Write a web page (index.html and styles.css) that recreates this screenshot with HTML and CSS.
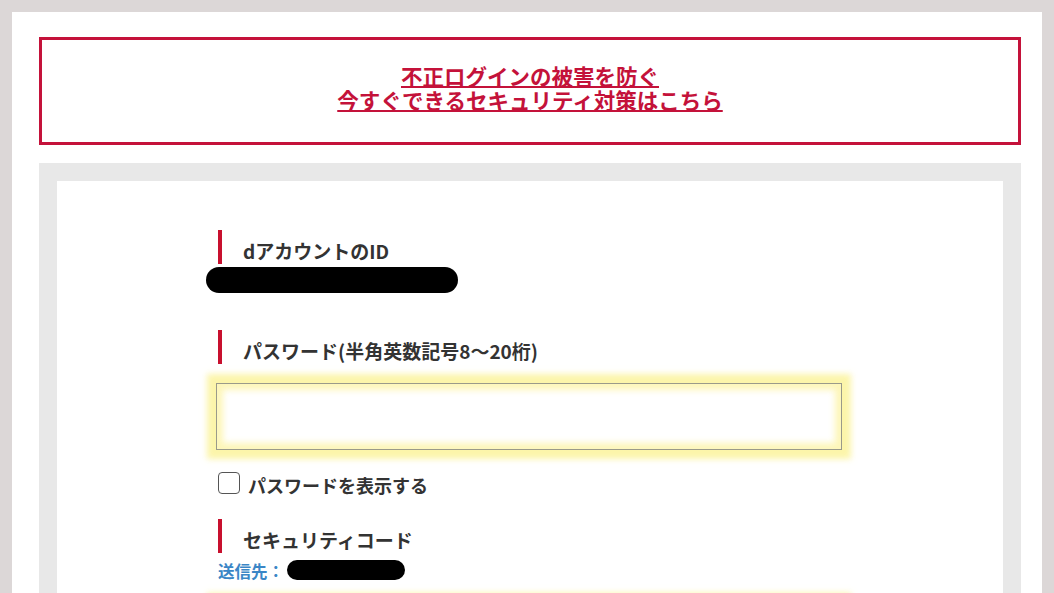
FILE: index.html
```html
<!DOCTYPE html>
<html lang="ja">
<head>
<meta charset="utf-8">
<title>ログイン</title>
<link rel="stylesheet" href="styles.css">
</head>
<body>
<div class="page">
  <div class="notice">
    <a class="notice-link" href="#">不正ログインの被害を防ぐ<br>今すぐできるセキュリティ対策はこちら</a>
  </div>
  <div class="frame">
    <div class="card">
      <form class="form">
        <div class="field-label">dアカウントのID</div>
        <div class="redact redact-id"></div>

        <div class="field-label label-pw">パスワード(半角英数記号8〜20桁)</div>
        <div class="input-wrap">
          <input class="text-input" type="password">
        </div>
        <label class="check-row">
          <span class="checkbox"></span>
          <span class="check-text">パスワードを表示する</span>
        </label>

        <div class="field-label label-sec">セキュリティコード</div>
        <div class="send-row">
          <span class="send-label">送信先：</span>
          <span class="redact redact-send"></span>
        </div>
        <div class="input-wrap input-sec">
          <input class="text-input" type="text">
        </div>
      </form>
    </div>
  </div>
</div>
</body>
</html>
```

FILE: styles.css
```css
html, body {
  margin: 0;
  padding: 0;
}
body {
  background: #dcd7d7;
  font-family: "Noto Sans CJK JP", "Noto Sans", sans-serif;
  color: #333;
  overflow: hidden;
  height: 593px;
}
.page {
  margin: 12px 12px 0 12px;
  background: #fff;
  padding: 25px 21px 0 27px;
  height: 556px;
  overflow: hidden;
}
.notice {
  border: 3px solid #c4123a;
  height: 102px;
  display: flex;
  align-items: center;
  justify-content: center;
  text-align: center;
}
.notice-link {
  color: #c4123a;
  font-weight: 700;
  font-size: 21.5px;
  line-height: 24px;
  text-decoration: underline;
  text-decoration-thickness: 2px;
  text-underline-offset: 1px;
  margin-top: -6px;
}
.frame {
  margin-top: 18px;
  background: #e8e8e8;
  padding: 18px 18px 0 18px;
}
.card {
  background: #fff;
  padding-top: 49px;
  height: 600px;
}
.form {
  width: 626px;
  margin: 0 auto;
  padding-left: 2px;
}
.field-label {
  border-left: 4px solid #c8102e;
  height: 26px;
  padding-top: 8px;
  padding-left: 21px;
  font-size: 19px;
  line-height: 26px;
  font-weight: 700;
  color: #333;
}
.redact {
  display: block;
  background: #000;
  border-radius: 13px;
}
.redact-id {
  width: 252px;
  height: 26px;
  margin-top: 3px;
  margin-left: -12px;
}
.label-pw {
  margin-top: 37px;
}
.input-wrap {
  margin-top: 19px;
  margin-left: -2px;
  width: 626px;
}
.text-input {
  display: block;
  box-sizing: border-box;
  width: 626px;
  height: 67px;
  border: 1px solid #9a9a8a;
  background: #fff;
  margin: 0;
  box-shadow: 0 0 6px 9px rgba(250, 236, 100, 0.55), inset 0 0 6px 6px rgba(250, 236, 100, 0.45);
  outline: none;
}
.check-row {
  display: flex;
  align-items: center;
  margin-top: 22px;
  height: 22px;
}
.checkbox {
  box-sizing: border-box;
  width: 22px;
  height: 22px;
  border: 1.5px solid #555;
  border-radius: 4px;
  background: #fff;
}
.check-text {
  margin-left: 8px;
  font-size: 18px;
  font-weight: 700;
  line-height: 22px;
  margin-top: 4px;
  color: #333;
}
.label-sec {
  margin-top: 25px;
}
.send-row {
  display: flex;
  align-items: center;
  margin-top: 7px;
  height: 20px;
}
.send-label {
  color: #3a86c6;
  font-size: 16.5px;
  font-weight: 700;
  line-height: 20px;
  margin-top: 1px;
}
.redact-send {
  width: 118px;
  height: 20px;
  border-radius: 10px;
  margin-left: 3px;
}
.input-sec {
  margin-top: 22px;
}
```
